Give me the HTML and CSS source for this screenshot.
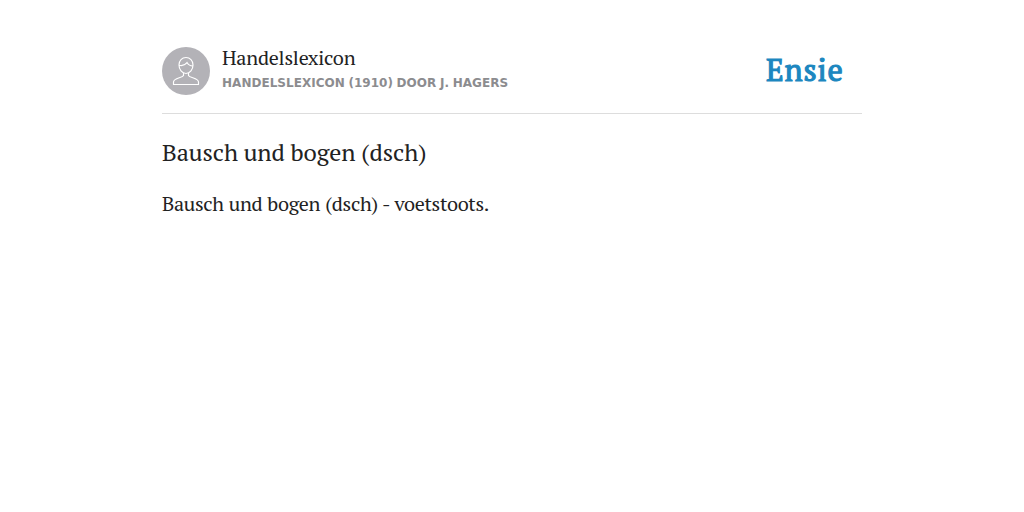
FILE: index.html
```html
<!DOCTYPE html>
<html lang="nl">
<head>
<meta charset="utf-8">
<title>Bausch und bogen (dsch)</title>
<link rel="stylesheet" href="styles.css">
</head>
<body>
<main class="page">
  <header class="header">
    <svg class="avatar" viewBox="0 0 48 48" aria-hidden="true">
      <circle class="avatar-bg" cx="24" cy="24" r="24"/>
      <path class="avatar-line" d="M17 18C17 13.500 20 10.500 24 10.500S31 13.500 31 18C31 22.500 28 26.500 24 26.500S17 22.500 17 18ZM17.200 18.300C20 19 23 18 25 15.500C26.500 18 28.500 19 30.800 19M21.500 26V28.500C20.500 31 11.500 31 11.500 35V37.500H36.500V35C36.500 31 27.500 31 26.500 28.500V26"/>
    </svg>
    <div class="source">
      <div class="name">Handelslexicon</div>
      <div class="author">Handelslexicon (1910) door J. Hagers</div>
    </div>
    <div class="logo">Ensie</div>
  </header>
  <h1 class="title">Bausch und bogen (dsch)</h1>
  <p class="text">Bausch und bogen (dsch) - voetstoots.</p>
</main>
</body>
</html>
```
FILE: styles.css
```css
body {
  margin: 0;
  background: #fff;
  color: #222;
  font-family: "PT Serif", "Noto Serif", "Liberation Serif", serif;
}
.page {
  width: 700px;
  margin: 0 auto;
  padding-top: 47px;
}
.header {
  display: flex;
  height: 66px;
  border-bottom: 1px solid #ddd;
}
.avatar {
  width: 48px;
  height: 48px;
}
.avatar-bg { fill: #b3b2b7; }
.avatar-line {
  fill: none;
  stroke: #fff;
  stroke-width: 1.15;
}
.source {
  flex: 1;
  margin-left: 12px;
}
.name {
  font-size: 20px;
  line-height: 22px;
  letter-spacing: -0.22px;
}
.author {
  margin-top: 5px;
  font: bold 12px/18px "DejaVu Sans", sans-serif;
  letter-spacing: 0.03px;
  word-spacing: -0.6px;
  color: #8c8c8f;
  text-transform: uppercase;
  white-space: nowrap;
}
.logo {
  width: 96px;
  font-size: 30.5px;
  line-height: 45px;
  letter-spacing: 0.8px;
  color: #1c87c0;
  -webkit-text-stroke: 1.1px #1c87c0;
}
.title {
  margin: 22px 0 0;
  font-size: 24px;
  line-height: 32px;
  font-weight: normal;
  letter-spacing: -0.07px;
}
.text {
  margin: 21px 0 0;
  font-size: 20px;
  line-height: 30px;
  letter-spacing: -0.3px;
  word-spacing: 0.4px;
}
```
